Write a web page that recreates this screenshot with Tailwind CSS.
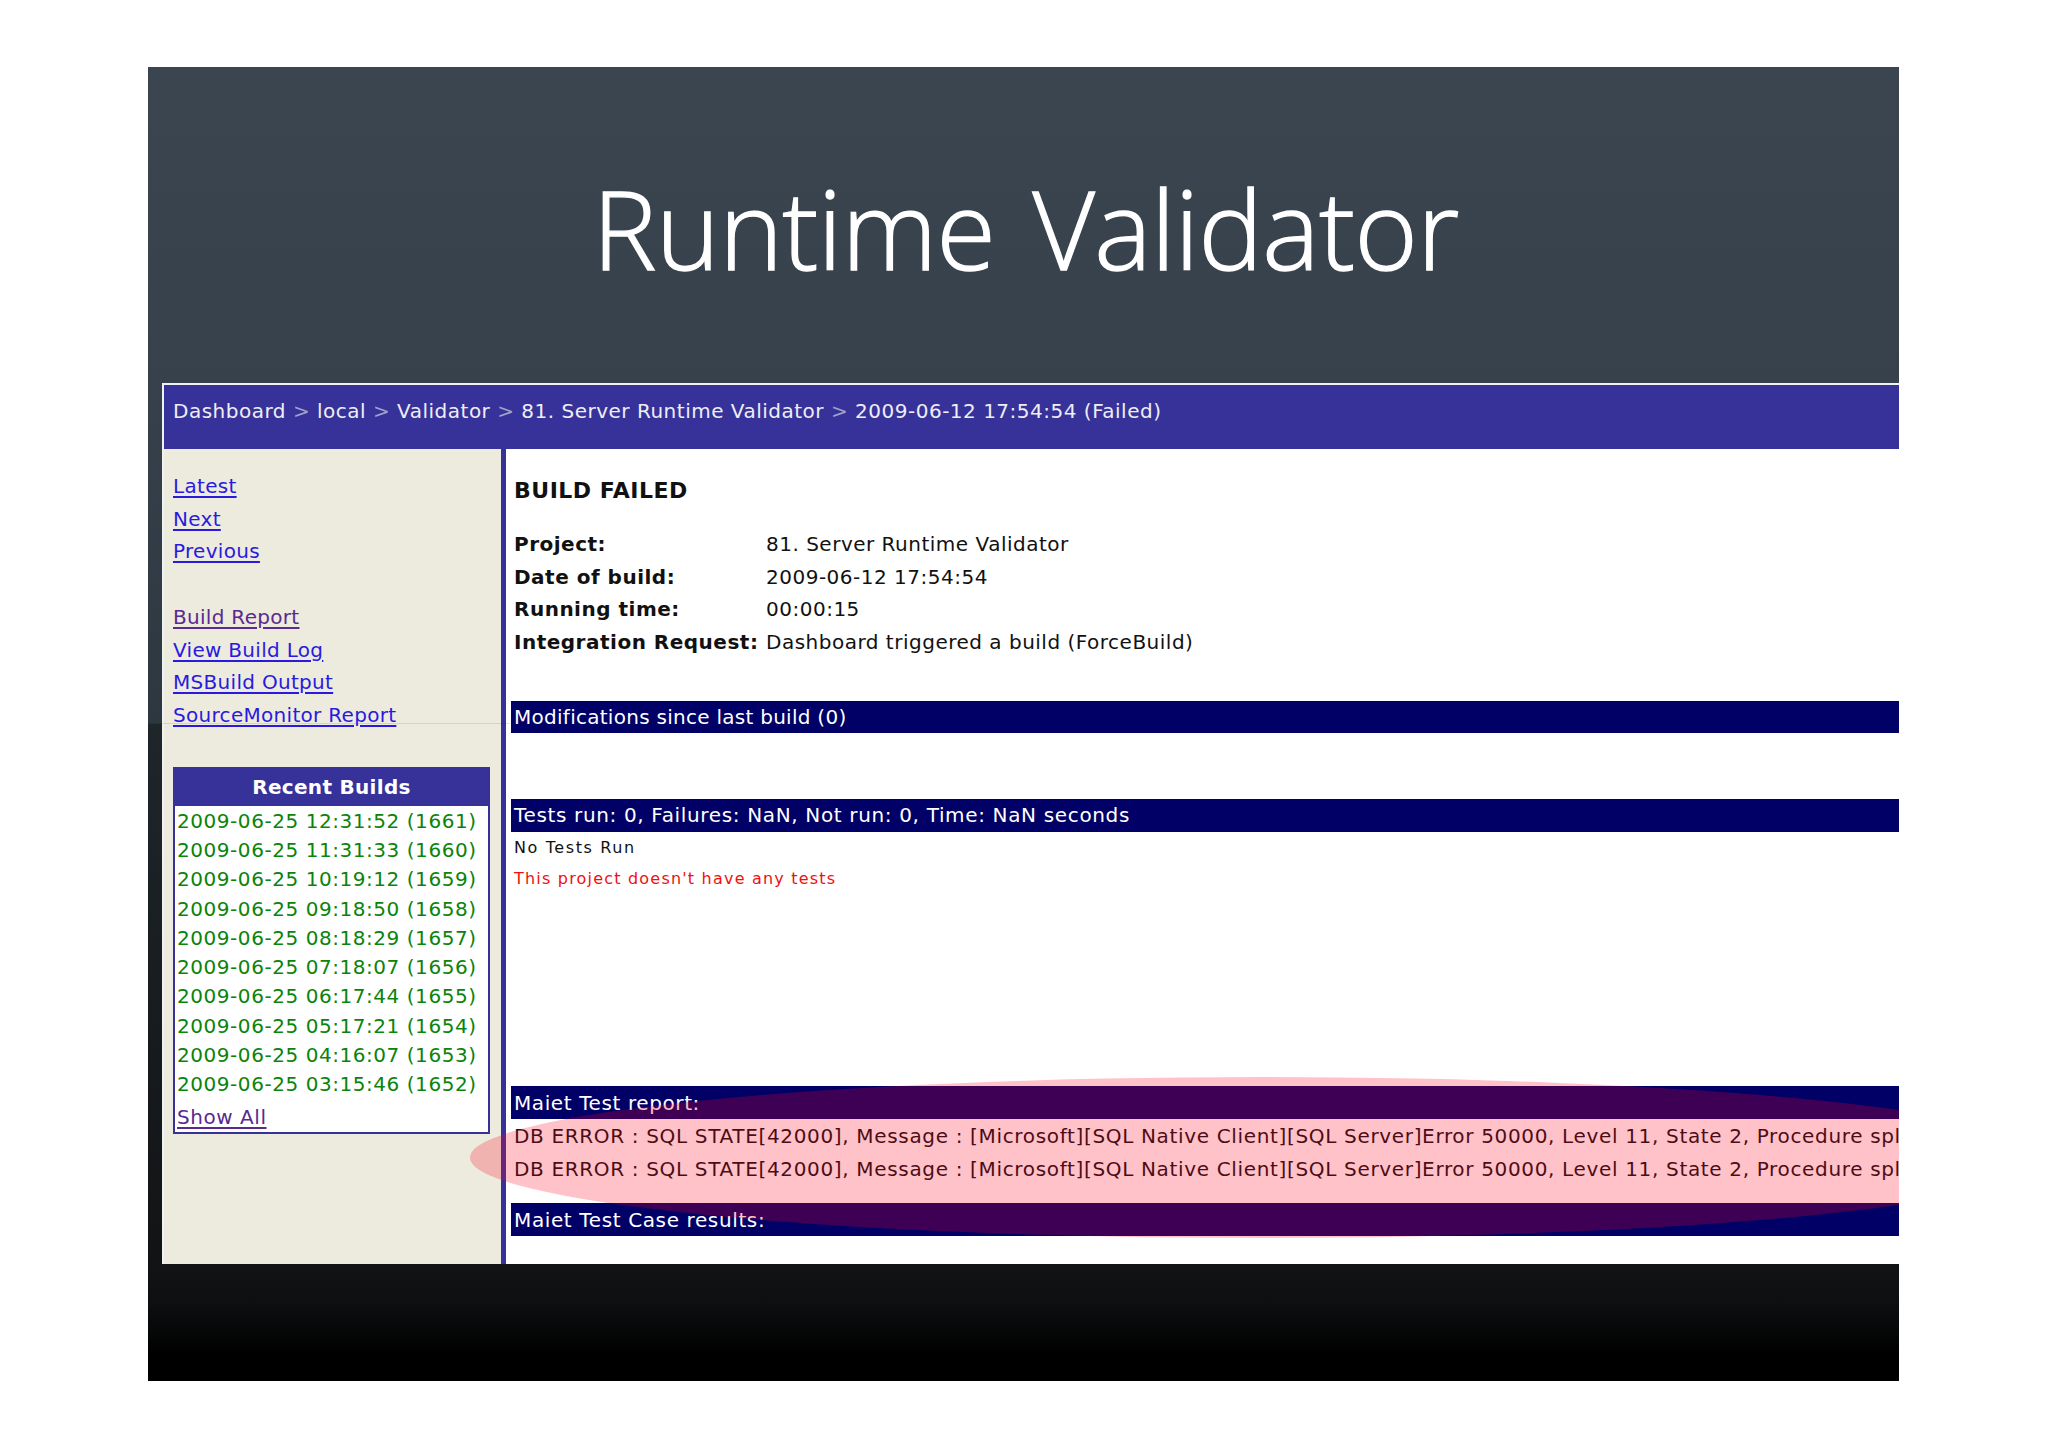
<!DOCTYPE html>
<html><head><meta charset="utf-8"><script src="https://cdn.jsdelivr.net/npm/@tailwindcss/browser@4"></script></head>
<body class="bg-white m-0">
<div class="w-[2048px] h-[1447px] bg-white pt-[67px] pl-[148px]">
<div class="relative w-[1751px] h-[1314px] overflow-hidden bg-[linear-gradient(180deg,#3a4550_0%,#36414b_24%,#2d3740_50%,#1f262a_50%,#121315_91%,#0d0f10_94%,#000000_98%)] font-['DejaVu_Sans',sans-serif]">
  <div class="h-[316px] pt-[87px] pl-[4px] text-center font-['Open_Sans',sans-serif] font-light text-[108px] leading-[150px] text-white tracking-[-0.6px] [word-spacing:10px] [-webkit-text-stroke:1.3px_white]">Runtime Validator</div>
  <div class="ml-[14px] h-[881px] border-l-2 border-t-2 border-[#eef2f2] flex flex-col overflow-hidden">
    <div class="h-[64px] shrink-0 bg-[#37329a] text-[#eeeef4] text-[20px] tracking-[0.5px] leading-[52px] pl-[9px] whitespace-nowrap">Dashboard <span class="text-[#a0a0c8]">&gt;</span> local <span class="text-[#a0a0c8]">&gt;</span> Validator <span class="text-[#a0a0c8]">&gt;</span> 81. Server Runtime Validator <span class="text-[#a0a0c8]">&gt;</span> 2009-06-12 17:54:54 (Failed)</div>
    <div class="flex flex-1 min-h-0">
      <aside class="w-[342px] shrink-0 bg-[#ecebdd] border-r-[5px] border-[#37329a] pl-[9px] pt-[21px] text-[20px] tracking-[0.3px] leading-[32.7px]">
        <a class="block underline decoration-2 underline-offset-[3px] text-[#2a1ae0]">Latest</a>
        <a class="block underline decoration-2 underline-offset-[3px] text-[#2a1ae0]">Next</a>
        <a class="block underline decoration-2 underline-offset-[3px] text-[#2a1ae0]">Previous</a>
        <a class="block underline decoration-2 underline-offset-[3px] text-[#5a2a90] mt-[32.7px]">Build Report</a>
        <a class="block underline decoration-2 underline-offset-[3px] text-[#2a1ae0]">View Build Log</a>
        <a class="block underline decoration-2 underline-offset-[3px] text-[#2a1ae0]">MSBuild Output</a>
        <a class="block underline decoration-2 underline-offset-[3px] text-[#2a1ae0]">SourceMonitor Report</a>
        <div class="mt-[35px] w-[317px] h-[367px] border-2 border-[#37329a] bg-white">
          <div class="h-[37px] bg-[#37329a] text-white font-bold text-center leading-[37px]">Recent Builds</div>
          <div class="pl-[2px] pt-px text-[#0a840a] tracking-[0.55px] leading-[29.3px] whitespace-nowrap">
            <div>2009-06-25 12:31:52 (1661)</div>
            <div>2009-06-25 11:31:33 (1660)</div>
            <div>2009-06-25 10:19:12 (1659)</div>
            <div>2009-06-25 09:18:50 (1658)</div>
            <div>2009-06-25 08:18:29 (1657)</div>
            <div>2009-06-25 07:18:07 (1656)</div>
            <div>2009-06-25 06:17:44 (1655)</div>
            <div>2009-06-25 05:17:21 (1654)</div>
            <div>2009-06-25 04:16:07 (1653)</div>
            <div>2009-06-25 03:15:46 (1652)</div>
            <a class="block underline decoration-2 underline-offset-[3px] text-[#5a2a90] leading-[32px] mt-[1px]">Show All</a>
          </div>
        </div>
      </aside>
      <main class="flex-1 min-w-0 bg-white pl-[5px] text-[20px] text-[#111] whitespace-nowrap overflow-hidden">
        <div class="h-[79px] pt-[26px] pl-[3px] text-[22px] tracking-[0.5px] leading-[32px] font-bold">BUILD FAILED</div>
        <div class="grid grid-cols-[252px_1fr] pl-[3px] tracking-[0.5px] leading-[32.6px]">
          <b>Project:</b><span>81. Server Runtime Validator</span>
          <b>Date of build:</b><span>2009-06-12 17:54:54</span>
          <b>Running time:</b><span>00:00:15</span>
          <b>Integration Request:</b><span>Dashboard triggered a build (ForceBuild)</span>
        </div>
        <div class="mt-[43px] h-[32px] bg-[#000066] text-white pl-[3px] tracking-[0.27px] leading-[32px]">Modifications since last build (0)</div>
        <div class="mt-[66px] h-[33px] bg-[#000066] text-white pl-[3px] tracking-[0.65px] leading-[33px]">Tests run: 0, Failures: NaN, Not run: 0, Time: NaN seconds</div>
        <div class="pl-[3px] h-[31px] text-[16px] tracking-[1.6px] leading-[32px]">No Tests Run</div>
        <div class="pl-[3px] h-[32px] text-[16px] tracking-[1.2px] leading-[32px] text-[#f01010]">This project doesn't have any tests</div>
        <div class="mt-[191px] h-[33px] bg-[#000066] text-white pl-[3px] tracking-[0.6px] leading-[35px]">Maiet Test report:</div>
        <div class="h-[33px] pl-[3px] tracking-[0.66px] leading-[35px]">DB ERROR : SQL STATE[42000], Message : [Microsoft][SQL Native Client][SQL Server]Error 50000, Level 11, State 2, Procedure spl</div>
        <div class="h-[33px] pl-[3px] tracking-[0.66px] leading-[35px]">DB ERROR : SQL STATE[42000], Message : [Microsoft][SQL Native Client][SQL Server]Error 50000, Level 11, State 2, Procedure spl</div>
        <div class="mt-[18px] h-[33px] bg-[#000066] text-white pl-[3px] tracking-[0.62px] leading-[35px]">Maiet Test Case results:</div>
      </main>
    </div>
  </div>
  <div class="absolute left-0 top-[656px] w-[362px] h-px bg-black/10"></div>
  <div class="absolute left-[322px] top-[1010px] w-[1582px] h-[161px] rounded-[50%] bg-[#ff0020]/24"></div>
</div>
</div>
</body></html>
